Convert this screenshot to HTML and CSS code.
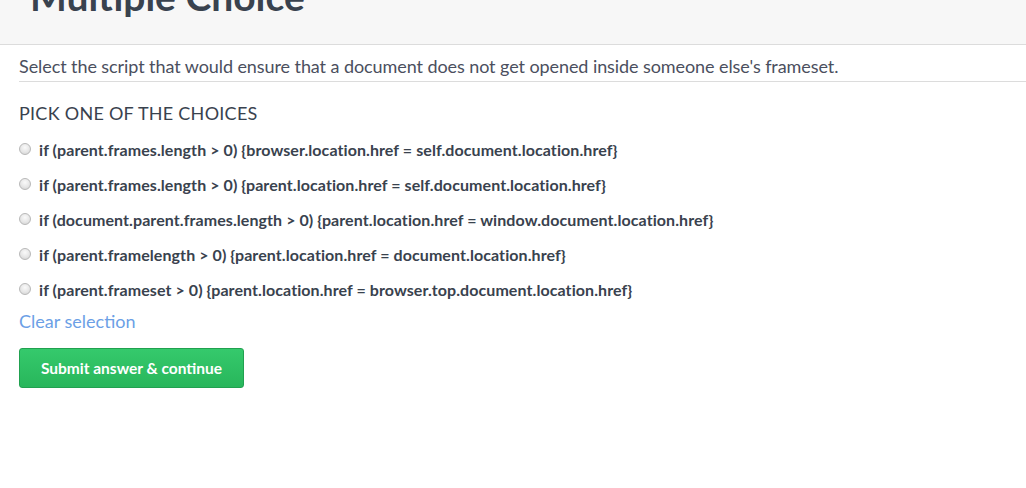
FILE: index.html
```html
<!DOCTYPE html>
<html>
<head>
<meta charset="utf-8">
<link rel="stylesheet" href="styles.css">
</head>
<body>
<header class="page-header">
  <h1 class="title">Multiple Choice</h1>
</header>
<main class="content">
  <p class="question">Select the script that would ensure that a document does not get opened inside someone else's frameset.</p>
  <h2 class="pick">PICK ONE OF THE CHOICES</h2>
  <ul class="choices">
    <li class="choice"><span class="radio"></span><span class="label">if (parent.frames.length &gt; 0) {browser.location.href = self.document.location.href}</span></li>
    <li class="choice"><span class="radio"></span><span class="label">if (parent.frames.length &gt; 0) {parent.location.href = self.document.location.href}</span></li>
    <li class="choice"><span class="radio"></span><span class="label">if (document.parent.frames.length &gt; 0) {parent.location.href = window.document.location.href}</span></li>
    <li class="choice"><span class="radio"></span><span class="label">if (parent.framelength &gt; 0) {parent.location.href = document.location.href}</span></li>
    <li class="choice"><span class="radio"></span><span class="label">if (parent.frameset &gt; 0) {parent.location.href = browser.top.document.location.href}</span></li>
  </ul>
  <a class="clear" href="#">Clear selection</a>
  <button class="submit">Submit answer &amp; continue</button>
</main>
</body>
</html>
```
FILE: styles.css
```css
html, body {
  margin: 0;
  padding: 0;
  background: #fff;
  font-family: Lato, "Open Sans", sans-serif;
  color: #333;
  overflow: hidden;
}
.page-header {
  height: 44px;
  background: #f7f7f7;
  border-bottom: 1px solid #dcdcdc;
  overflow: hidden;
}
.title {
  margin: -23px 0 0 30px;
  font-size: 39px;
  line-height: 1;
  font-weight: 700;
  color: #39424e;
}
.content {
  padding-left: 19px;
}
.question {
  margin: 10px 0 0;
  padding-bottom: 4px;
  font-size: 18px;
  line-height: 22px;
  letter-spacing: -0.08px;
  color: #4b4f5e;
  border-bottom: 1px solid #dcdcdc;
}
.pick {
  margin: 20px 0 0;
  font-size: 18px;
  line-height: 22px;
  letter-spacing: 0.26px;
  font-weight: 400;
  color: #39424e;
}
.choices {
  list-style: none;
  margin: 16px 0 0;
  padding: 0;
}
.choice {
  display: flex;
  align-items: flex-start;
  height: 35px;
}
.radio {
  width: 12px;
  height: 12px;
  margin-top: 3px;
  border-radius: 50%;
  border: 1px solid #b8b8b8;
  box-sizing: border-box;
  background: radial-gradient(circle at 50% 35%, #fafafa 0%, #e6e6e6 55%, #cfcfcf 100%);
  flex: none;
}
.label {
  margin-left: 8px;
  margin-top: 1px;
  font-size: 16px;
  line-height: 18px;
  letter-spacing: 0.08px;
  font-weight: 700;
  color: #39424e;
}
.clear {
  display: block;
  margin-top: -5px;
  font-size: 18px;
  line-height: 22px;
  color: #6c9fe6;
  text-decoration: none;
}
.submit {
  display: block;
  margin-top: 16px;
  width: 225px;
  height: 40px;
  border: 1px solid #21a150;
  border-radius: 3px;
  background: linear-gradient(#35c96c, #28b65b);
  color: #fff;
  font-family: Lato, "Open Sans", sans-serif;
  font-size: 15.5px;
  font-weight: 700;
  padding: 0;
}
```
